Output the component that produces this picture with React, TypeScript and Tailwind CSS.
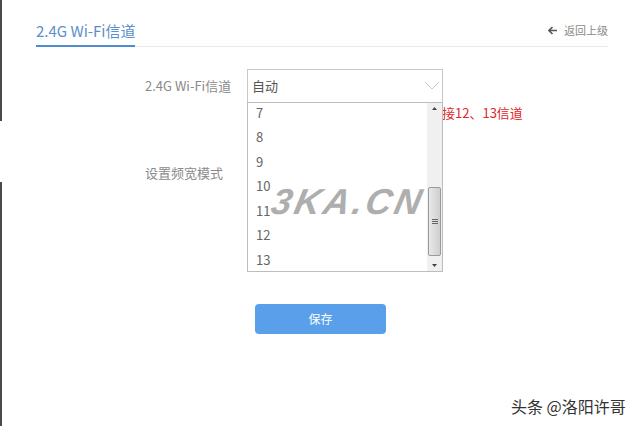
import React from "react";

const cjk = { fontFamily: '"Noto Sans CJK SC", "Noto Sans", sans-serif' };

export default function App() {
  const items = ["7", "8", "9", "10", "11", "12", "13"];
  return (
    <div className="relative flex h-[426px] w-[640px] overflow-hidden bg-white" style={cjk}>
      <div className="flex w-[2px] flex-col">
        <div className="h-[121px] bg-[#4a4a4a]" />
        <div className="h-[61px]" />
        <div className="flex-1 bg-[#4a4a4a]" />
      </div>
      <div className="flex flex-1 flex-col pl-[34px] pr-[32px]">
        {/* header */}
        <div className="flex h-[47px] items-end justify-between border-b border-[#e9e9e9]">
          <div className="-mb-px border-b-2 border-[#4f8bd0] pb-[3px] text-[15px] leading-[22px] text-[#5b8fcc]">
            2.4G Wi-Fi信道
          </div>
          <div className="mb-[8px] flex items-center gap-[6px] text-[11px] leading-[16px] text-[#8a8a8a]">
            <svg width="10" height="9" viewBox="0 0 10 9" className="text-[#555]">
              <path d="M4.5 1 L1 4.5 L4.5 8 M1 4.5 H9" stroke="currentColor" strokeWidth="1.6" fill="none" />
            </svg>
            <span>返回上级</span>
          </div>
        </div>

        {/* form */}
        <div className="relative flex flex-col pl-[109px] pt-[22px]">
          <div className="flex items-center">
            <div className="w-[102px] text-[13px] text-[#8a8a8a]">2.4G Wi-Fi信道</div>
            <div className="flex h-[34px] w-[196px] items-center justify-between border border-[#c8c8c8] pl-[4px] pr-[2px] text-[13px] text-[#555]">
              <span>自动</span>
              <svg width="16" height="10" viewBox="0 0 16 10">
                <path d="M1 1 L8 8 L15 1" stroke="#c8c8c8" strokeWidth="1" fill="none" />
              </svg>
            </div>
          </div>
          <div className="flex h-[20px] items-center pl-[297px] text-[13px] text-[#e0262b]">接12、13信道</div>
          <div className="mt-[33px] flex items-center">
            <div className="w-[102px] text-[13px] text-[#8a8a8a]">设置频宽模式</div>
            <div className="h-[34px] w-[196px] border border-[#c8c8c8]" />
          </div>
          <div className="mt-[114px] pl-[110px]">
            <button className="h-[30px] w-[131px] rounded-[4px] bg-[#5a9fe9] text-[12px] text-white">保存</button>
          </div>

          {/* dropdown overlay */}
          <div className="absolute left-[211px] top-[55px] flex h-[170px] w-[196px] overflow-hidden border border-[#bdbdbd] bg-white">
            <div className="-mt-[3px] flex flex-1 flex-col pl-[8px] text-[13px] text-[#666]">
              {items.map((n) => (
                <div key={n} className="flex h-[24.5px] shrink-0 items-center">
                  {n}
                </div>
              ))}
            </div>
            <div className="flex w-[15px] flex-col items-center bg-[#f0f0f0]">
              <svg width="7" height="12" viewBox="0 0 7 12" className="shrink-0">
                <path d="M1 7 L3.5 4 L6 7 Z" fill="#444" />
              </svg>
              <div className="mt-[72px] flex h-[69px] w-[13px] items-center justify-center rounded-[2px] border border-[#9a9a9a] bg-gradient-to-r from-[#e8e8e8] via-[#dcdcdc] to-[#cfcfcf]">
                <div className="flex flex-col gap-[1px]">
                  <div className="h-px w-[6px] bg-[#666]" />
                  <div className="h-px w-[6px] bg-[#666]" />
                  <div className="h-px w-[6px] bg-[#666]" />
                </div>
              </div>
              <div className="flex-1" />
              <svg width="7" height="12" viewBox="0 0 7 12" className="shrink-0">
                <path d="M1 5 L3.5 8 L6 5 Z" fill="#444" />
              </svg>
            </div>
          </div>
        </div>
      </div>

      {/* watermark 3KA.CN */}
      <div
        className="pointer-events-none absolute left-[272px] top-[183px] text-[36px] font-black italic leading-[38px] tracking-[3px] text-[#a6a6a6] opacity-90"
        style={{ fontFamily: '"Liberation Sans", Arial, sans-serif', transform: "skewX(-12deg)" }}
      >
        3KA.CN
      </div>

      {/* watermark bottom-right */}
      <div className="pointer-events-none absolute left-[511px] top-[394px] text-[16px] leading-[24px] text-[#333]">
        头条 @洛阳许哥
      </div>
    </div>
  );
}
